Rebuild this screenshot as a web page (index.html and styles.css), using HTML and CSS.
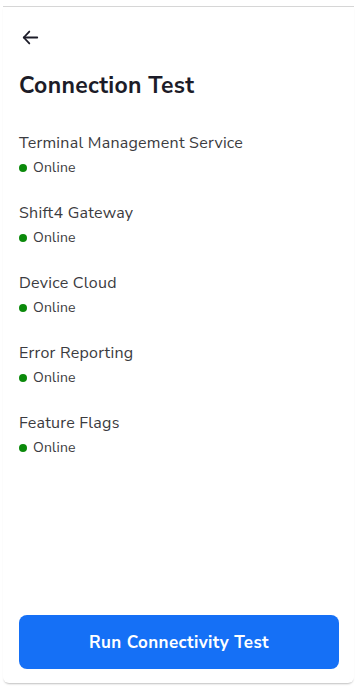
FILE: index.html
```html
<!DOCTYPE html>
<html lang="en">
<head>
    <meta charset="UTF-8">
    <meta name="viewport" content="width=device-width, initial-scale=1.0">
    <title>Connection Test</title>
    <link rel="stylesheet" href="styles.css">
</head>
<body>

    <div class="screen">
        <main class="content">
            <!-- Voltar -->
            <button class="back-button" aria-label="Back">
                <svg width="19" height="19" viewBox="0 0 24 24" fill="none" stroke="#1c1c28" stroke-width="2.3" stroke-linecap="round" stroke-linejoin="round">
                    <path d="M20.5 12H3.5"></path>
                    <path d="M10.5 4.5L3.5 12l7 7.5"></path>
                </svg>
            </button>

            <h1>Connection Test</h1>

            <!-- Lista de serviços -->
            <ul class="service-list">
                <li class="service">
                    <span class="service-name">Terminal Management Service</span>
                    <span class="status online">Online</span>
                </li>
                <li class="service">
                    <span class="service-name">Shift4 Gateway</span>
                    <span class="status online">Online</span>
                </li>
                <li class="service">
                    <span class="service-name">Device Cloud</span>
                    <span class="status online">Online</span>
                </li>
                <li class="service">
                    <span class="service-name">Error Reporting</span>
                    <span class="status online">Online</span>
                </li>
                <li class="service">
                    <span class="service-name">Feature Flags</span>
                    <span class="status online">Online</span>
                </li>
            </ul>
        </main>

        <footer class="footer">
            <button type="button" class="run-button">Run Connectivity Test</button>
        </footer>
    </div>

</body>
</html>
```

FILE: styles.css
```css
/* Estilos Gerais */
* {
    box-sizing: border-box;
}

html, body {
    height: 100%;
}

body {
    font-family: "Nunito Sans", Lato, "Open Sans", sans-serif;
    background-color: #fff;
    margin: 0;
    padding: 6px 3px 6px 3px;
}

.screen {
    height: 100%;
    display: flex;
    flex-direction: column;
    border-top: 1px solid #d6d6d6;
    border-radius: 0 0 6px 6px;
    box-shadow: 0 2px 2px -1px rgba(0, 0, 0, 0.25);
    background-color: #fff;
}

.content {
    flex: 1;
    padding: 0 16px;
}

.back-button {
    display: block;
    background: none;
    border: none;
    padding: 0;
    margin: 21px 0 0 2px;
    width: 19px;
    height: 19px;
    cursor: pointer;
}

.back-button svg {
    display: block;
}

h1 {
    margin: 24px 0 0 0;
    font-size: 23px;
    font-weight: 700;
    letter-spacing: 0.3px;
    color: #1c1c28;
    line-height: 30px;
}

/* Lista de serviços */
.service-list {
    list-style: none;
    margin: 31px 0 0 0;
    padding: 0;
}

.service {
    display: flex;
    flex-direction: column;
    height: 70px;
}

.service-name {
    font-size: 16px;
    line-height: 22px;
    letter-spacing: 0.25px;
    color: #3b3b40;
}

.status {
    display: flex;
    align-items: center;
    gap: 6px;
    margin-top: 4px;
    font-size: 14px;
    line-height: 20px;
    letter-spacing: 0.2px;
    color: #3b3b40;
}

.status::before {
    content: '';
    width: 8px;
    height: 8px;
    border-radius: 50%;
}

.online::before {
    background-color: #0b8a0b;
}

/* Botão */
.footer {
    padding: 0 15px 14px 16px;
}

.run-button {
    width: 100%;
    height: 54px;
    border: none;
    border-radius: 8px;
    background-color: #1570f6;
    color: #fff;
    font-family: inherit;
    font-size: 17px;
    font-weight: 700;
    letter-spacing: 0.4px;
    cursor: pointer;
}
```
